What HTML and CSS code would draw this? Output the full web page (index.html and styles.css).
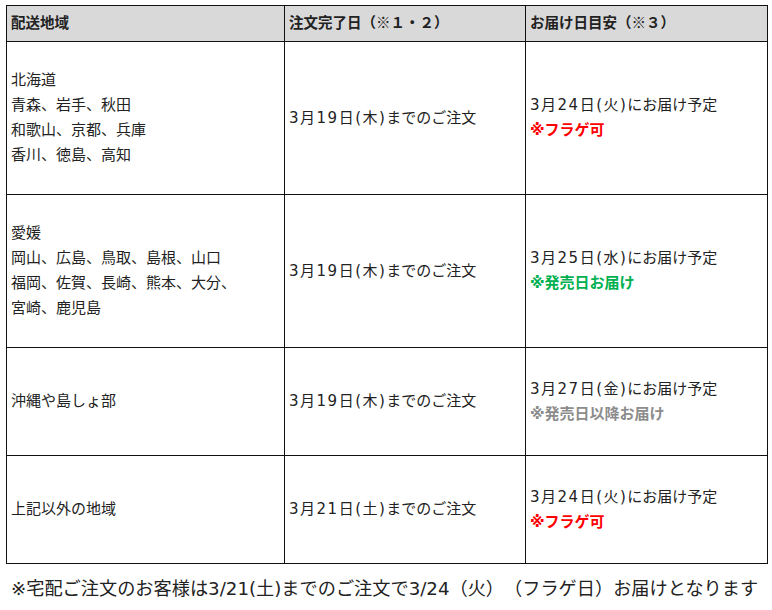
FILE: index.html
```html
<!DOCTYPE html>
<html lang="ja">
<head>
<meta charset="utf-8">
<link rel="stylesheet" href="styles.css">
</head>
<body>
<table class="ship">
  <colgroup>
    <col class="c1"><col class="c2"><col class="c3">
  </colgroup>
  <thead>
    <tr class="head">
      <th>配送地域</th>
      <th>注文完了日（※１・２）</th>
      <th>お届け日目安（※３）</th>
    </tr>
  </thead>
  <tbody>
    <tr class="tall">
      <td>北海道<br>青森、岩手、秋田<br>和歌山、京都、兵庫<br>香川、徳島、高知</td>
      <td><span class="date">3月19日(木)</span>までのご注文</td>
      <td><span class="date">3月24日(火)</span>にお届け予定<br><span class="red">※フラゲ可</span></td>
    </tr>
    <tr class="tall">
      <td>愛媛<br>岡山、広島、鳥取、島根、山口<br>福岡、佐賀、長崎、熊本、大分、<br>宮崎、鹿児島</td>
      <td><span class="date">3月19日(木)</span>までのご注文</td>
      <td><span class="date">3月25日(水)</span>にお届け予定<br><span class="green">※発売日お届け</span></td>
    </tr>
    <tr class="short">
      <td>沖縄や島しょ部</td>
      <td><span class="date">3月19日(木)</span>までのご注文</td>
      <td><span class="date">3月27日(金)</span>にお届け予定<br><span class="gray">※発売日以降お届け</span></td>
    </tr>
    <tr class="short">
      <td>上記以外の地域</td>
      <td><span class="date">3月21日(土)</span>までのご注文</td>
      <td><span class="date">3月24日(火)</span>にお届け予定<br><span class="red">※フラゲ可</span></td>
    </tr>
  </tbody>
</table>
<p class="note">※宅配ご注文のお客様は3/21(土)までのご注文で3/24（火）（フラゲ日）お届けとなります</p>
</body>
</html>
```

FILE: styles.css
```css
html, body {
  margin: 0;
  padding: 0;
  background: #ffffff;
}
body {
  font-family: "DejaVu Sans", "Noto Sans CJK JP", sans-serif;
  color: #222222;
  text-spacing-trim: space-all;
}
.ship {
  border-collapse: collapse;
  margin: 5px 0 0 6px;
  width: 761px;
  table-layout: fixed;
}
.c1 { width: 278px; }
.c2 { width: 241px; }
.c3 { width: 242px; }
.ship th, .ship td {
  border: 1px solid #111111;
  padding: 0 4px;
  text-align: left;
  vertical-align: middle;
}
.ship th {
  background: #d9d9d9;
  font-family: "Noto Sans CJK JP", sans-serif;
  font-size: 14.5px;
  font-weight: bold;
  height: 31px;
  line-height: 20px;
  padding-bottom: 4px;
}
.ship td {
  font-size: 15px;
  line-height: 25px;
}
.date { letter-spacing: 1.5px; }
.tall td { height: 152px; }
.short td { height: 107px; }
.red { color: #ff0000; font-weight: bold; }
.green { color: #00b050; font-weight: bold; }
.gray { color: #8c8c8c; font-weight: bold; }
.note {
  margin: 12px 0 0 11px;
  font-size: 18.2px;
  line-height: 26px;
  white-space: nowrap;
}
```
